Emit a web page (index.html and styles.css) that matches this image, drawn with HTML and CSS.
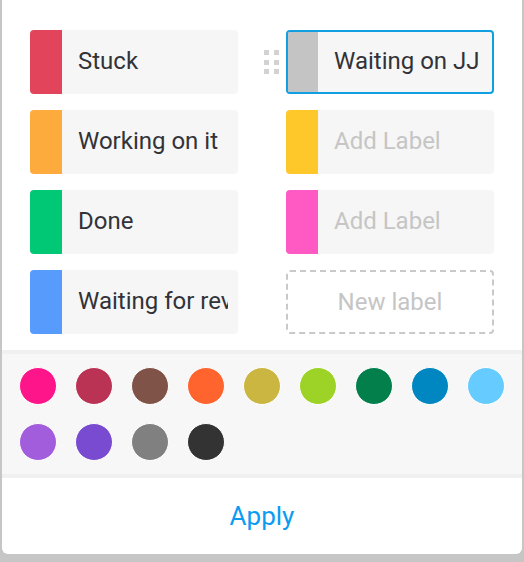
FILE: index.html
```html
<!DOCTYPE html>
<html>
<head>
<meta charset="utf-8">
<link rel="stylesheet" href="styles.css">
</head>
<body>
<div class="panel">
  <div class="labels">
    <div class="label"><span class="bar" style="background:#e2445c"></span><span class="text">Stuck</span></div>
    <div class="label selected">
      <span class="handle"><i></i><i></i><i></i><i></i><i></i><i></i></span>
      <span class="bar" style="background:#c4c4c4"></span><span class="text">Waiting on JJ</span>
    </div>
    <div class="label"><span class="bar" style="background:#fdab3d"></span><span class="text">Working on it</span></div>
    <div class="label"><span class="bar" style="background:#fec82b"></span><span class="text placeholder">Add Label</span></div>
    <div class="label"><span class="bar" style="background:#00c875"></span><span class="text">Done</span></div>
    <div class="label"><span class="bar" style="background:#ff5ac4"></span><span class="text placeholder">Add Label</span></div>
    <div class="label"><span class="bar" style="background:#579bfc"></span><span class="text">Waiting for review</span></div>
    <div class="new-label">New label</div>
  </div>
  <div class="colors">
    <span class="dot" style="background:#ff158a"></span>
    <span class="dot" style="background:#bb3354"></span>
    <span class="dot" style="background:#7f5347"></span>
    <span class="dot" style="background:#ff642e"></span>
    <span class="dot" style="background:#cab641"></span>
    <span class="dot" style="background:#9cd326"></span>
    <span class="dot" style="background:#037f4c"></span>
    <span class="dot" style="background:#0086c0"></span>
    <span class="dot" style="background:#66ccff"></span>
    <span class="dot" style="background:#a25ddc"></span>
    <span class="dot" style="background:#784bd1"></span>
    <span class="dot" style="background:#808080"></span>
    <span class="dot" style="background:#333333"></span>
  </div>
  <div class="apply">Apply</div>
</div>
</body>
</html>
```
FILE: styles.css
```css
* { box-sizing: border-box; }
html, body { margin: 0; padding: 0; }
body {
  background: #c6c6c6;
  font-family: Roboto, "Liberation Sans", sans-serif;
  width: 524px;
  height: 562px;
  overflow: hidden;
}
.panel {
  margin-left: 2px;
  width: 520px;
  height: 554px;
  background: #fff;
  border-radius: 0 0 6px 6px;
  display: flex;
  flex-direction: column;
}
.labels {
  display: grid;
  grid-template-columns: 208px 208px;
  column-gap: 48px;
  row-gap: 16px;
  padding: 30px 28px 16px 28px;
}
.label {
  position: relative;
  height: 64px;
  background: #f6f6f6;
  border-radius: 4px;
  display: flex;
  align-items: center;
}
.bar {
  width: 32px;
  height: 100%;
  flex: none;
  border-radius: 4px 0 0 4px;
}
.text {
  margin: -2px 10px 0 16px;
  font-size: 24px;
  line-height: 28px;
  color: #323338;
  white-space: nowrap;
  overflow: hidden;
  flex: 1;
  min-width: 0;
}
.placeholder { color: #c5c5c5; }
.selected {
  border: 2px solid #10a0e2;
}
.selected .bar { width: 30px; border-radius: 2px 0 0 2px; }
.handle {
  position: absolute;
  left: -24px;
  top: 18px;
  display: grid;
  grid-template-columns: 5px 5px;
  grid-auto-rows: 5px;
  column-gap: 5px;
  row-gap: 4.5px;
}
.handle i { background: #d2d2d2; display: block; }
.new-label {
  height: 64px;
  border: 2px dashed #c9c9c9;
  border-radius: 4px;
  display: flex;
  align-items: center;
  justify-content: center;
  font-size: 24px;
  color: #c5c5c5;
}
.colors {
  background: #f7f7f7;
  border-top: 4px solid #f0f0f0;
  border-bottom: 4px solid #f0f0f0;
  padding: 13px 17px;
  display: flex;
  flex-wrap: wrap;
  gap: 18px;
}
.dot {
  width: 38px;
  height: 38px;
  border-radius: 50%;
  border: 1px solid #fff;
}
.apply {
  flex: 1;
  display: flex;
  align-items: center;
  justify-content: center;
  font-size: 26px;
  color: #0b9cf2;
}
```
